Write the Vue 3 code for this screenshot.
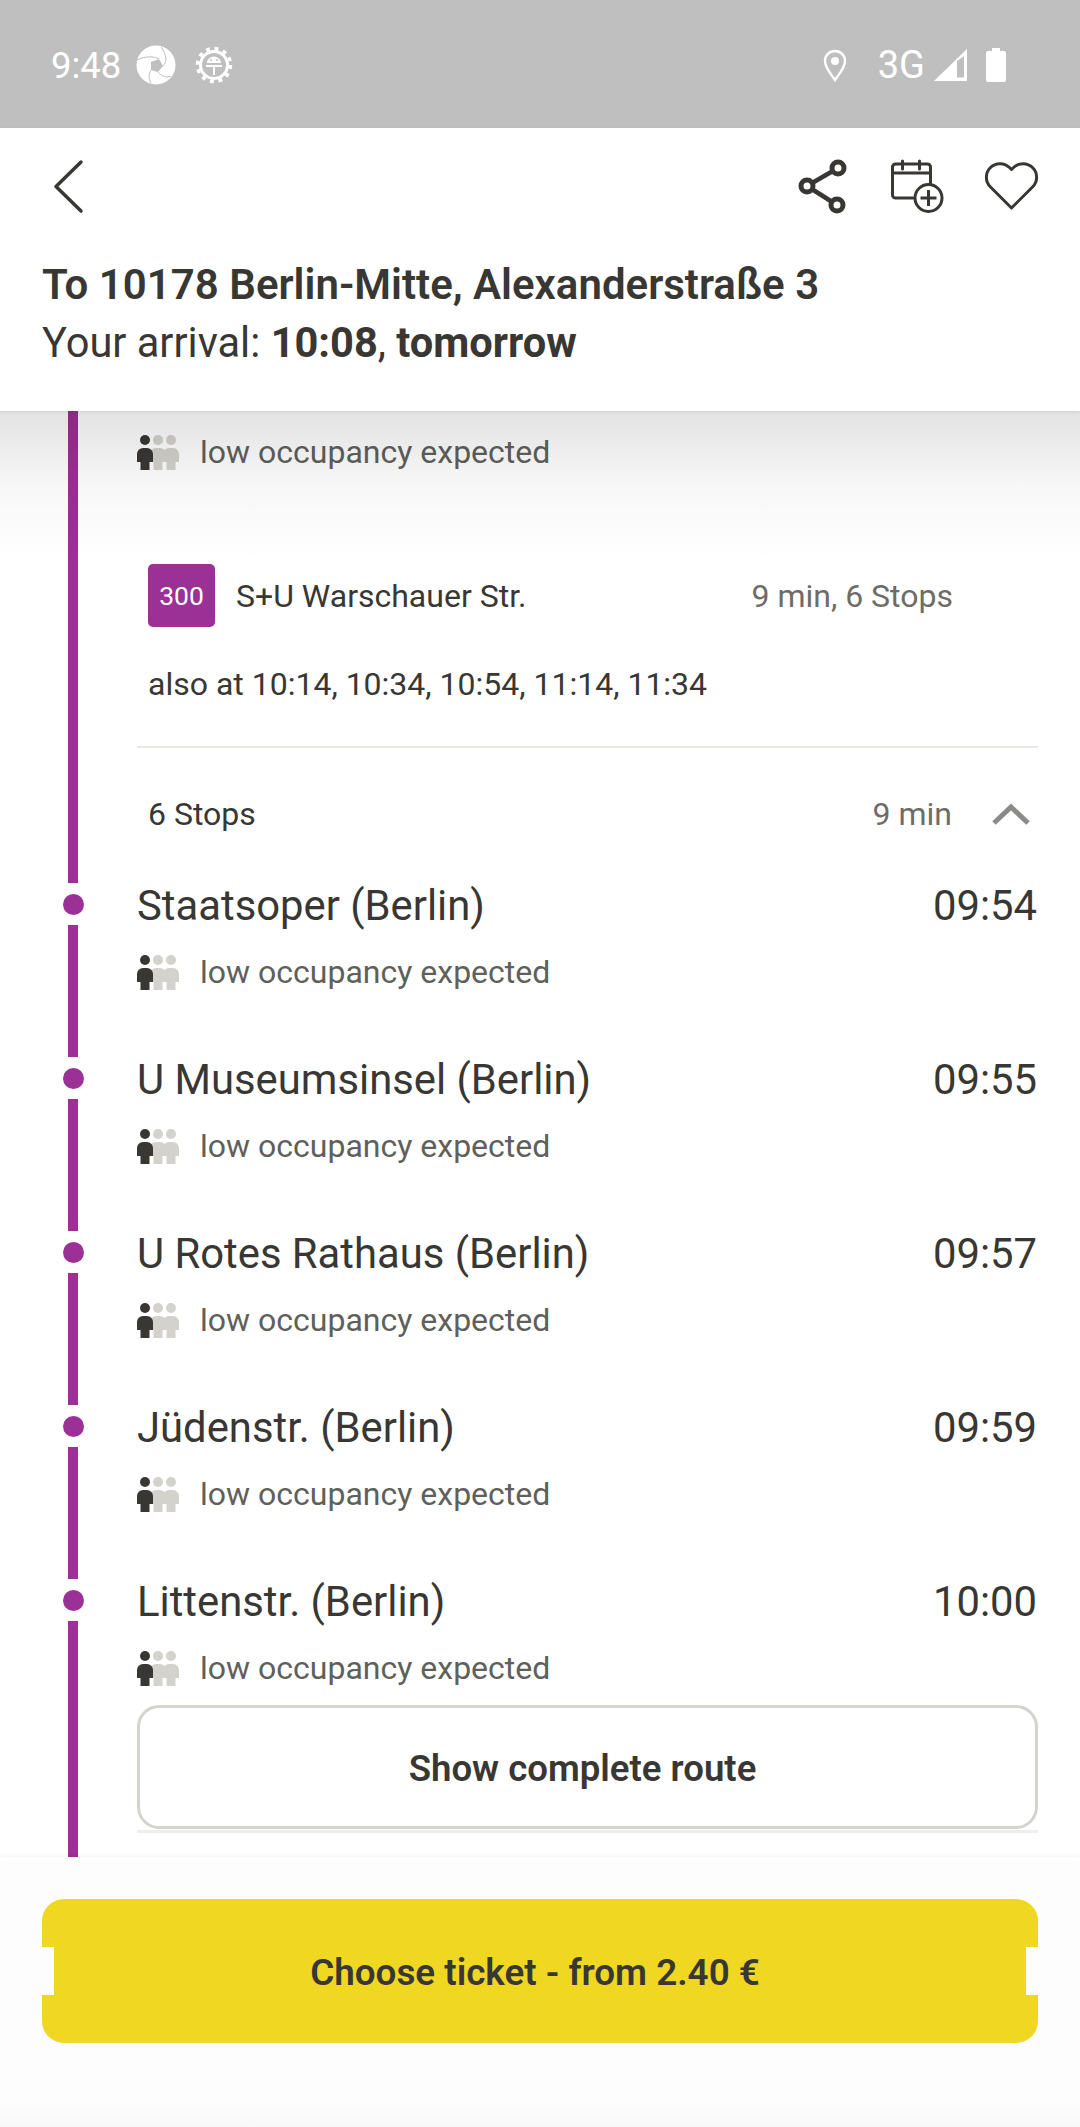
<template>
  <div class="page">
    <div class="status-bar">
      <div class="status-left">
        <span class="clock">9:48</span>
        <svg class="st-aperture" viewBox="0 0 40 40">
          <circle cx="20" cy="20" r="19.5" fill="#fff" />
          <path d="M15 17 L23 14 L27 21 L22 27 L15 25 Z" fill="#bfbfbf" />
          <path d="M1 15 C9 11 18 11 23 14 M25 2 C31 10 31 17 27 21 M35 31 C30 33 25 31 22 27 M15 38 C12 33 13 29 15 25" fill="none" stroke="#bfbfbf" stroke-width="1" />
        </svg>
        <svg class="st-gear" viewBox="0 0 38 38">
          <circle cx="19" cy="19" r="13.5" fill="none" stroke="#fff" stroke-width="3" />
          <circle cx="19" cy="19" r="16.500" fill="none" stroke="#fff" stroke-width="3.500" stroke-dasharray="4 4.64" />
          <path d="M12 17 a7 6.500 0 0 1 14 0 Z" fill="#fff" />
          <path d="M11 20 H27 M19 20 V29" fill="none" stroke="#fff" stroke-width="2" />
          <circle cx="16" cy="14" r="1" fill="#bfbfbf" />
          <circle cx="22" cy="14" r="1" fill="#bfbfbf" />
        </svg>
      </div>
      <div class="status-right">
        <svg class="st-pin" viewBox="0 0 24 33">
          <path d="M12 31 C8 25 2 19 2 12 a10 10 0 0 1 20 0 C22 19 16 25 12 31 Z" fill="none" stroke="#fff" stroke-width="2.4" />
          <circle cx="12" cy="12" r="4" fill="#fff" />
        </svg>
        <span class="net">3G</span>
        <svg class="st-signal" viewBox="0 0 33 32">
          <path d="M0 32 L33 0 V32 Z M23 12 V28.500 H30 V7 Z" fill="#fff" fill-rule="evenodd" />
        </svg>
        <svg class="st-battery" viewBox="0 0 20 34">
          <path d="M6 0 H14 V3 H18 a2 2 0 0 1 2 2 V32 a2 2 0 0 1 -2 2 H2 a2 2 0 0 1 -2 -2 V5 a2 2 0 0 1 2 -2 H6 Z" fill="#fff" />
        </svg>
      </div>
    </div>

    <header class="header">
      <div class="toolbar">
        <svg class="tool" viewBox="0 0 60 60">
          <path d="M43 6 L18 30.500 L43 55" fill="none" stroke="#383733" stroke-width="3.500" stroke-linecap="round" stroke-linejoin="round" />
        </svg>
        <div class="tool-group">
          <svg class="tool" viewBox="0 0 60 60">
            <path d="M15 30 L46 12 M15 30 L45 49" fill="none" stroke="#383733" stroke-width="4.500" />
            <circle cx="46" cy="12" r="6" fill="#fff" stroke="#383733" stroke-width="5" />
            <circle cx="15" cy="30" r="6" fill="#fff" stroke="#383733" stroke-width="5" />
            <circle cx="45" cy="49" r="6" fill="#fff" stroke="#383733" stroke-width="5" />
          </svg>
          <svg class="tool" viewBox="0 0 60 60">
            <path d="M26 42 H8.500 a3 3 0 0 1 -3 -3 V11 a3 3 0 0 1 3 -3 H40.500 a3 3 0 0 1 3 3 V28 M5.500 17 H43.500 M15.500 5 V13 M32.500 5 V13" fill="none" stroke="#383733" stroke-width="3" stroke-linecap="round" />
            <circle cx="41.500" cy="42" r="13.500" fill="#fff" stroke="#383733" stroke-width="3" />
            <path d="M41.500 34 V50 M33.500 42 H49.500" fill="none" stroke="#383733" stroke-width="3" />
          </svg>
          <svg class="tool" viewBox="0 0 60 60">
            <path d="M30.500 52 L9.500 31 A13.500 13.500 0 0 1 28.500 11.500 L30.500 13.500 L32.500 11.500 A13.500 13.500 0 0 1 51.500 31 Z" fill="none" stroke="#383733" stroke-width="3" stroke-linejoin="round" />
          </svg>
        </div>
      </div>
      <h1 class="title">To 10178 Berlin-Mitte, Alexanderstraße 3</h1>
      <p class="arrival">Your arrival: <b>10:08</b>, <b>tomorrow</b></p>
    </header>

    <main class="scroll">
      <div class="top-shade"></div>

      <section class="row">
        <div class="rail-line solid"></div>
        <div class="leg-body">
          <div class="occ">
            <svg class="people" viewBox="0 0 42 35">
              <use href="#person" x="26" fill="#d3d2cd" />
              <use href="#person" x="13" fill="#d3d2cd" />
              <use href="#person" x="0" fill="#383733" />
              <defs>
                <g id="person">
                  <circle cx="8" cy="5" r="5" />
                  <path d="M3.500 35 V27 H0 V19 a6 6 0 0 1 6 -6 h4 a6 6 0 0 1 6 6 v8 h-3.500 v8 Z" />
                </g>
              </defs>
            </svg>
            <span>low occupancy expected</span>
          </div>

          <div class="line-info">
            <span class="badge">300</span>
            <span class="direction">S+U Warschauer Str.</span>
            <span class="duration">9 min, 6 Stops</span>
          </div>
          <p class="also">also at 10:14, 10:34, 10:54, 11:14, 11:34</p>
          <div class="divider"></div>
          <div class="summary">
            <span class="summary-stops">6 Stops</span>
            <span class="summary-time">9 min</span>
            <svg class="chevron" viewBox="0 0 38 22">
              <path d="M2 20 L19 4 L36 20" fill="none" stroke="#8a8a88" stroke-width="5" />
            </svg>
          </div>
        </div>
      </section>

      <section v-for="(stop, index) in stops" :key="stop.name" class="row">
        <div class="stop-rail">
          <div class="dot-wrap"><span class="dot"></span></div>
          <div class="rail-line"></div>
        </div>
        <div class="stop-body" :class="{ last: index === stops.length - 1 }">
          <div class="stop-head">
            <span>{{ stop.name }}</span>
            <span>{{ stop.time }}</span>
          </div>
          <div class="occ stop-occ">
            <svg class="people" viewBox="0 0 42 35">
              <use href="#person" x="26" fill="#d3d2cd" />
              <use href="#person" x="13" fill="#d3d2cd" />
              <use href="#person" x="0" fill="#383733" />
            </svg>
            <span>low occupancy expected</span>
          </div>
          <template v-if="index === stops.length - 1">
            <button class="route-btn">Show complete route</button>
            <div class="divider bottom"></div>
          </template>
        </div>
      </section>
    </main>

    <footer class="footer">
      <button class="ticket-btn">Choose ticket - from 2.40 €</button>
    </footer>
  </div>
</template>

<script setup>
const stops = [
  { name: 'Staatsoper (Berlin)', time: '09:54' },
  { name: 'U Museumsinsel (Berlin)', time: '09:55' },
  { name: 'U Rotes Rathaus (Berlin)', time: '09:57' },
  { name: 'Jüdenstr. (Berlin)', time: '09:59' },
  { name: 'Littenstr. (Berlin)', time: '10:00' },
]
</script>

<style scoped>
.page {
  display: flex;
  flex-direction: column;
  width: 1080px;
  height: 2127px;
  overflow: hidden;
  background: #fff;
  color: #383733;
  font-family: Roboto, 'Liberation Sans', sans-serif;
}

.status-bar {
  display: flex;
  justify-content: space-between;
  align-items: center;
  flex: 0 0 128px;
  padding: 2px 74px 0 51px;
  box-sizing: border-box;
  background: #bfbfbf;
  color: #fff;
}

.status-left,
.status-right {
  display: flex;
  align-items: center;
}

.clock {
  font-size: 36.5px;
  width: 85px;
}

.st-aperture {
  width: 40px;
  height: 40px;
}

.st-gear {
  width: 38px;
  height: 38px;
  margin-left: 19px;
}

.st-pin {
  width: 24px;
  height: 33px;
}

.net {
  font-size: 38px;
  margin-left: 31px;
}

.st-signal {
  width: 33px;
  height: 32px;
  margin-left: 9px;
}

.st-battery {
  width: 20px;
  height: 34px;
  margin-left: 19px;
}

.header {
  position: relative;
  z-index: 2;
  flex: 0 0 283px;
  padding: 28px 39px 0 42px;
  box-sizing: border-box;
  background: #fff;
  box-shadow: 0 1px 3px rgba(0, 0, 0, 0.08);
}

.toolbar {
  display: flex;
  justify-content: space-between;
  margin-left: -4px;
}

.tool-group {
  display: flex;
  gap: 34.5px;
}

.tool {
  width: 60px;
  height: 60px;
  overflow: visible;
}

.title {
  margin: 40px 0 0;
  font-size: 42px;
  line-height: 58px;
  font-weight: 600;
}

.arrival {
  margin: 0;
  font-size: 41.6px;
  line-height: 57px;
}

.arrival b {
  font-weight: 700;
}

.scroll {
  position: relative;
  display: flex;
  flex-direction: column;
  flex: 1;
  min-height: 0;
  overflow: hidden;
}

.top-shade {
  position: absolute;
  z-index: 1;
  top: 0;
  left: 0;
  right: 0;
  height: 150px;
  background: linear-gradient(rgba(0, 0, 0, 0.115), rgba(0, 0, 0, 0.03) 50%, rgba(0, 0, 0, 0));
  pointer-events: none;
}

.row {
  display: flex;
  flex: none;
  padding-right: 42px;
}

.row:last-child {
  flex: 1;
}

.rail-line {
  flex: 1;
  width: 10px;
  background: #9b3096;
}

.rail-line.solid {
  flex: 0 0 10px;
  margin-left: 68px;
  margin-right: 59px;
}

.stop-rail {
  display: flex;
  flex-direction: column;
  align-items: center;
  flex: 0 0 10px;
  min-width: 0;
  margin-left: 68px;
  margin-right: 59px;
}

.dot-wrap {
  display: flex;
  align-items: center;
  justify-content: center;
  height: 42px;
}

.dot {
  flex: none;
  width: 21px;
  height: 21px;
  border-radius: 50%;
  background: #9b3096;
}

.leg-body {
  flex: 1;
  min-width: 0;
  padding: 21px 0 49px;
}

.occ {
  display: flex;
  align-items: center;
  height: 40px;
  font-size: 32px;
  color: #5f5f5b;
}

.people {
  width: 42px;
  height: 35px;
  margin-right: 21px;
}

.line-info {
  display: flex;
  align-items: center;
  height: 63px;
  margin-top: 92px;
  padding: 0 85px 0 11px;
  font-size: 32px;
}

.badge {
  display: flex;
  align-items: center;
  justify-content: center;
  width: 67px;
  height: 63px;
  border-radius: 5px;
  background: #9b3096;
  color: #fff;
  font-size: 26.5px;
}

.direction {
  margin-left: 21px;
}

.duration {
  margin-left: auto;
  color: #6c6c68;
}

.also {
  margin: 37px 0 0;
  padding-left: 11px;
  font-size: 32px;
  line-height: 40px;
}

.divider {
  height: 2px;
  margin-top: 42px;
  background: #e8e8e4;
}

.summary {
  display: flex;
  align-items: center;
  height: 40px;
  margin-top: 46px;
  padding: 0 8px 0 11px;
  font-size: 32px;
}

.summary-time {
  margin-left: auto;
  color: #6c6c68;
}

.chevron {
  width: 38px;
  height: 22px;
  margin-left: 40px;
}

.stop-body {
  flex: 1;
  min-width: 0;
  padding-bottom: 65px;
}

.stop-body.last {
  padding-bottom: 0;
}

.stop-head {
  display: flex;
  justify-content: space-between;
  padding-right: 1px;
  font-size: 41.8px;
  line-height: 46px;
}

.stop-occ {
  margin-top: 23px;
}

.route-btn {
  display: block;
  width: 100%;
  height: 124px;
  margin-top: 17px;
  padding: 2px 10px 0 0;
  border: 3px solid #d4d3cf;
  border-radius: 22px;
  background: #fff;
  color: #383733;
  font-family: inherit;
  font-size: 36.6px;
  font-weight: 600;
}

.divider.bottom {
  height: 3px;
  margin-top: 1px;
  background: #eeeeea;
}

.footer {
  position: relative;
  flex: 0 0 270px;
  padding: 42px 42px 0;
  box-sizing: border-box;
  background: linear-gradient(#fdfdfd 90%, #f8f8f8);
  box-shadow: 0 -2px 5px rgba(0, 0, 0, 0.04);
}

.ticket-btn {
  position: relative;
  display: block;
  width: 100%;
  height: 144px;
  padding: 2px 10px 0 0;
  border: none;
  border-radius: 22px;
  background: #f0d722;
  color: #383733;
  font-family: inherit;
  font-size: 36.8px;
  font-weight: 600;
}

/* notches cut in both button sides */
.ticket-btn::before,
.ticket-btn::after {
  content: '';
  position: absolute;
  top: 48px;
  width: 12px;
  height: 48px;
  background: #fdfdfd;
}

.ticket-btn::before {
  left: 0;
}

.ticket-btn::after {
  right: 0;
}
</style>
